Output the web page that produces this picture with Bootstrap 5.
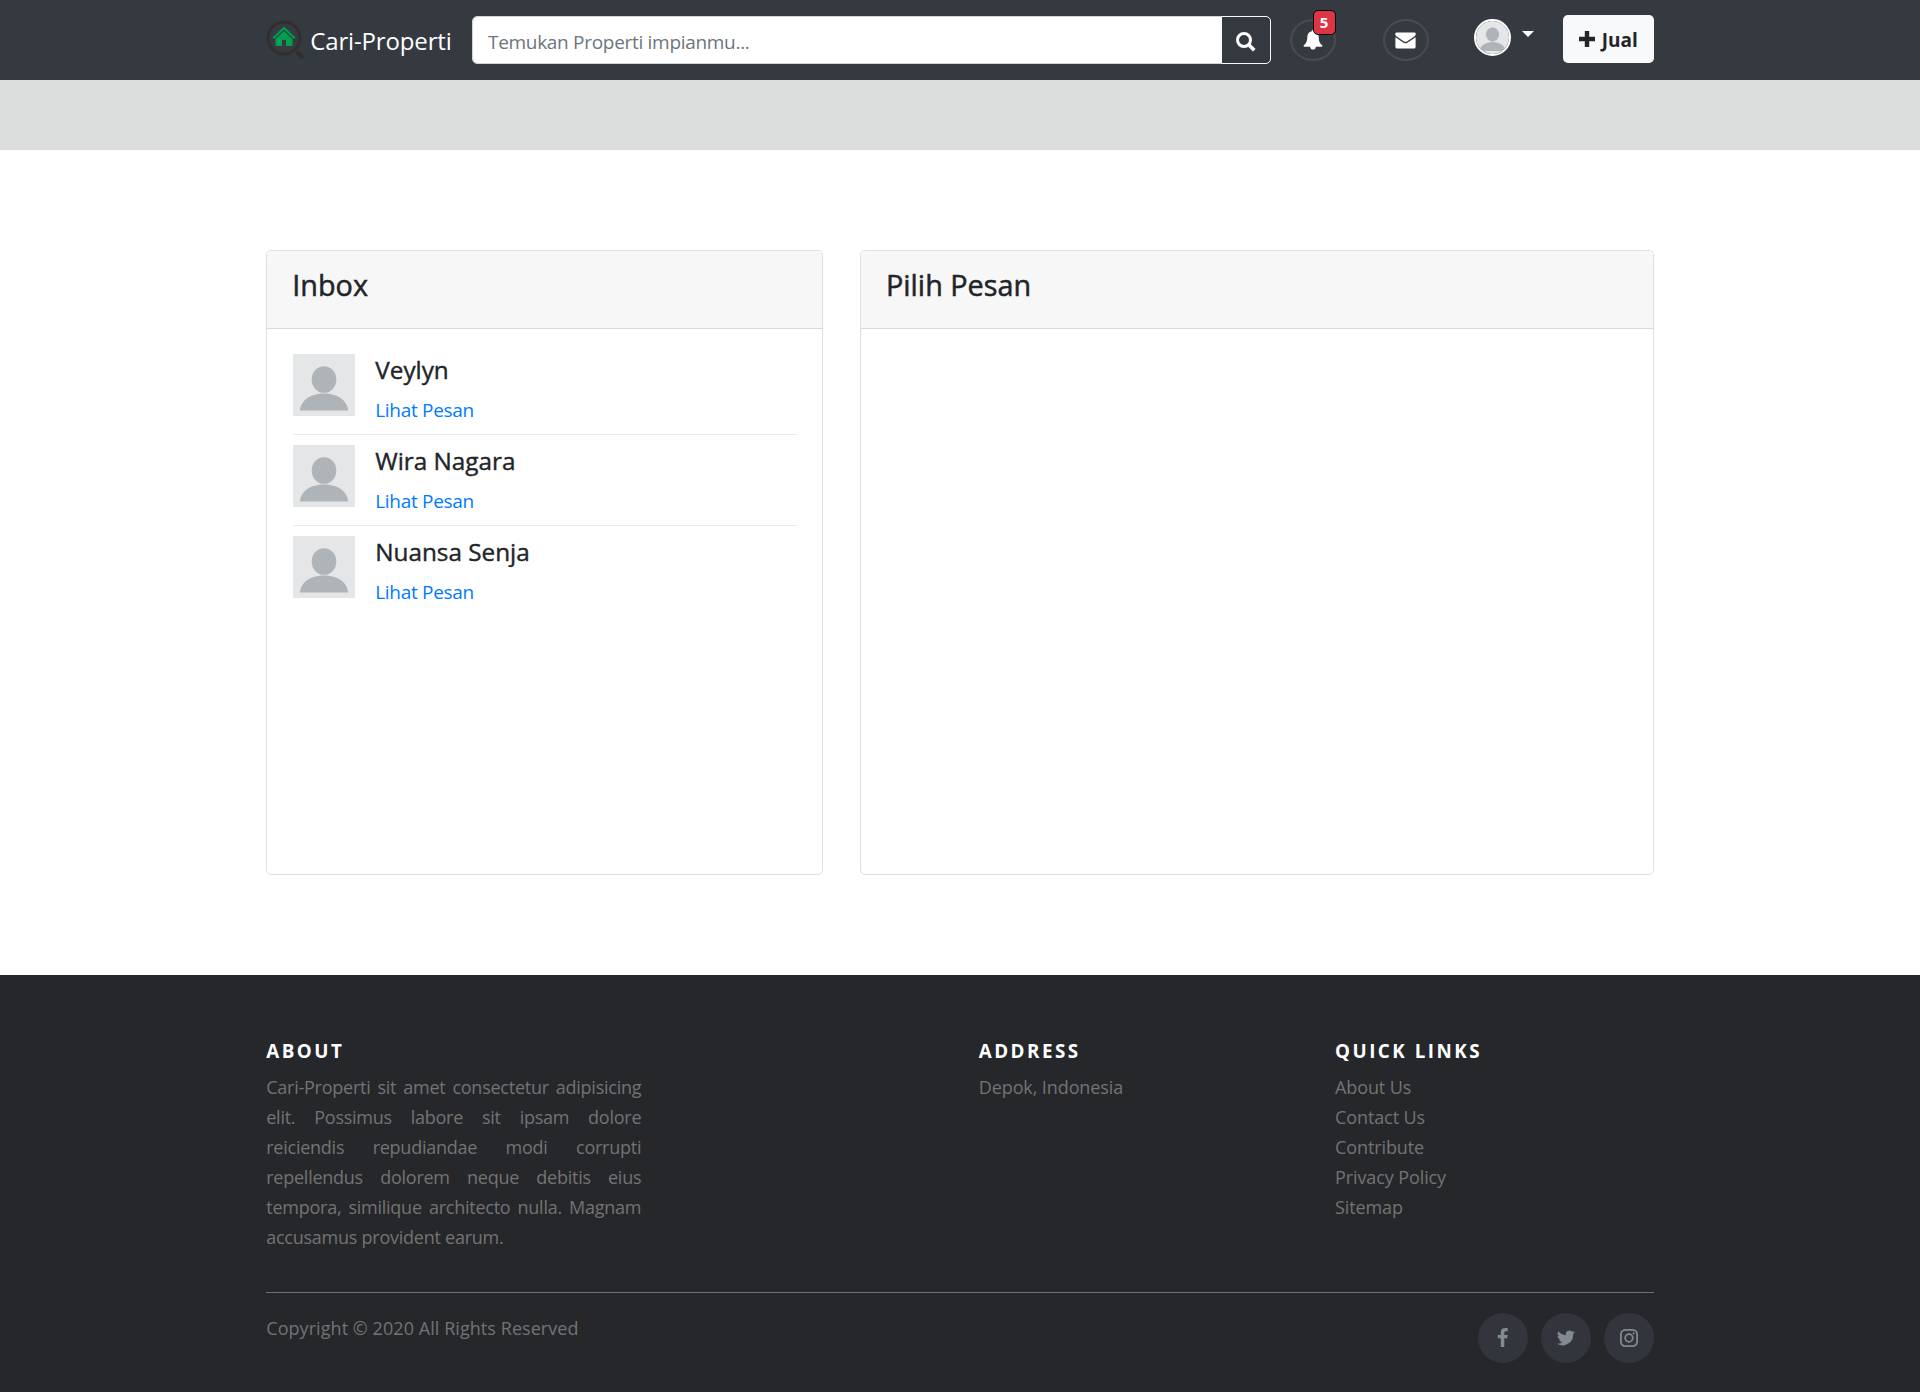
<!DOCTYPE html>
<html lang="id">
<head>
<meta charset="utf-8">
<meta name="viewport" content="width=device-width, initial-scale=1">
<title>Cari-Properti</title>
<link href="https://cdn.jsdelivr.net/npm/bootstrap@5.3.0/dist/css/bootstrap.min.css" rel="stylesheet">
<style>
html { font-size: 20px; }
body { font-family: "Open Sans", "Noto Sans", sans-serif; font-size: 19px; line-height: 30px; color: #212529; background: #fff; }
.container { max-width: 1425px; padding: 0 18.75px; }
.row { --bs-gutter-x: 37.5px; }
.topbar { height: 80px; background: #353a41; padding: 0; }
.topbar .container { height: 80px; align-items: flex-start; justify-content: flex-start; flex-wrap: nowrap; }
.brand-link { display: flex; width: 205.75px; color: #fff; text-decoration: none; font-size: 24px; padding-top: 20px; }
.brand-link span { margin: 6px 0 0 6px; white-space: nowrap; line-height: 30px; letter-spacing: -.15px; }
.search-group { width: 799px; height: 48px; margin-top: 16px; }
.search-group .form-control { border: 1px solid #ced4da; border-radius: 5px 0 0 5px; padding: 4px 15px 0; font-size: 19px; color: #495057; letter-spacing: -.3px; }
.search-group .form-control::placeholder { color: #6c757d; opacity: 1; }
.search-group .btn { width: 50px; padding: 0 1px 0 0; border: 1px solid #f8f9fa; border-radius: 0 5px 5px 0; color: #fff; }
.round-btn { width: 46px; height: 42px; border: 2px solid #4a4d50; border-radius: 50%; margin-top: 19px; color: #fff; display: flex; align-items: center; justify-content: center; position: relative; }
.bell-btn { margin-left: 18.5px; }
.mail-btn { margin-left: 47px; }
.bell-count { position: absolute; left: 21px; top: -11px; width: 23px; height: 25px; border: 1px solid #000; border-radius: 5px; background: #dc3545; font-size: 15px; font-weight: 700; line-height: 23px; text-align: center; color: #fff; }
.user-pic { width: 37px; height: 37px; border: 2px solid #fff; border-radius: 50%; overflow: hidden; margin: 19px 0 0 45px; display: block; }
.user-pic svg { display: block; width: 33px; height: 33px; }
.caret-down { border: 6px solid transparent; border-top-color: #fff; border-bottom: 0; margin: 31px 0 0 11px; }
.sell-btn { width: 91px; height: 48px; margin: 15px 0 0 auto; padding: 2px 0 0; font-size: 19px; font-weight: 700; background: #f8f9fa; border: 0; border-radius: 5px; color: #212529; display: flex; align-items: center; justify-content: center; gap: 7px; }
.sell-btn svg { margin-top: -2px; }
.band { height: 70px; background: #dcdedd; }
.inbox-zone { padding: 100px 0; }
.panel { height: 625px; border: 1px solid #dfdfdf; border-radius: 5px; }
.panel .card-header { height: 78px; padding: 15px 25px; background: #f7f7f7; border-bottom: 1px solid #d9d9d9; }
.panel .card-header h4 { font-size: 28.8px; line-height: 38px; font-weight: 500; -webkit-text-stroke: .5px; margin: 0; }
.panel .card-body { padding: 25px 25px 25px 26px; }
.chat-row { height: 91px; display: flex; gap: 20px; }
.chat-row + .chat-row { border-top: 1px solid #e9e9e9; padding-top: 10px; }
.chat-row:first-child { height: 80px; }
.chat-row h5 { font-size: 24.3px; line-height: 30px; font-weight: 500; -webkit-text-stroke: .4px; margin: 1px 0 10px; }
.chat-row a { color: #007bff; text-decoration: none; display: block; line-height: 30px; letter-spacing: -.3px; }
.site-footer { background: #26272b; color: #737373; height: 417px; padding-top: 56px; font-size: 18px; letter-spacing: -.1px; }
.site-footer h6 { color: #fff; font-size: 18.8px; line-height: 40px; font-weight: 700; letter-spacing: 2.5px; margin: 0 0 1px; }
.site-footer p { margin: 0; }
.about-text { width: 375px; text-align: justify; letter-spacing: -.25px; }
.site-footer .copy-text { letter-spacing: .06px; }
.site-footer ul { list-style: none; margin: 0; padding: 0; }
.site-footer a { color: #737373; text-decoration: none; }
.site-footer hr { border: 0; border-top: 1px solid #717173; opacity: 1; margin: 40px 0 20px; }
.socials { gap: 13px; }
.site-footer .socials a { width: 50px; height: 50px; border-radius: 50%; background: #33353d; color: #818a91; display: flex; align-items: center; justify-content: center; }
</style>
</head>
<body>
<svg width="0" height="0" class="d-none"><symbol id="avatar" viewBox="0 0 62 62"><rect width="62" height="62" fill="#e4e6e7"/><ellipse cx="31" cy="25.500" rx="12.300" ry="13.300" fill="#aeb4b7"/><path d="M7 56.500C7.500 46 18 39.500 31 39.500S54.500 46 55 56.500z" fill="#aeb4b7"/></symbol></svg>
<nav class="navbar topbar"><div class="container">
<a class="brand-link" href="#"><svg width="38" height="40" viewBox="0 0 38 40"><circle cx="18" cy="18" r="16" fill="none" stroke="#332d2d" stroke-width="2.800"/><path d="M30.500 31.500l6.500 6.500" stroke="#332d2d" stroke-width="4"/><path d="M18 6.500L29.500 17.500l-1.500 1.400L18 9.400 8 18.900 6.500 17.500z" fill="#009e4f"/><path d="M18 11L26.500 19v7H20v-6h-4v6H9.500v-7z" fill="#009e4f"/></svg><span>Cari-Properti</span></a>
<form class="input-group flex-nowrap search-group"><input class="form-control" type="text" placeholder="Temukan Properti impianmu..."><button class="btn" type="button" aria-label="Cari"><svg width="20" height="20" viewBox="0 0 20 20" fill="none" stroke="currentColor"><circle cx="8" cy="8" r="6.500" stroke-width="3"/><path d="M12.800 12.800l5.500 5.500" stroke-width="3.600"/></svg></button></form>
<a class="round-btn bell-btn" href="#"><svg width="20" height="20" viewBox="0 0 20 20" fill="currentColor"><path d="M10 0c.8 0 1.200.6 1.200 1.300 3 .6 4.500 3 4.500 5.700 0 5 1.800 7 3.800 8.500 0 .8-.6 1.300-1.300 1.300h-5.400a2.800 2.800 0 0 1-5.600 0H1.800c-.7 0-1.300-.5-1.300-1.300C2.500 14 4.300 12 4.300 7c0-2.700 1.500-5.100 4.500-5.700C8.800.6 9.200 0 10 0z"/></svg><span class="bell-count">5</span></a>
<a class="round-btn mail-btn" href="#"><svg width="21" height="17" viewBox="0 0 22 18" fill="currentColor"><path d="M2 .5h18a1.800 1.800 0 0 1 1.800 2.200c-.3 1.200-1.300 2-2.300 2.700L12.500 10c-1 .6-2 .6-3 0L2.500 5.400C1.500 4.700.5 3.900.2 2.700A1.800 1.800 0 0 1 2 .5z"/><path d="M.3 5.500L9 11.300c1.400.9 2.600.9 4 0l8.700-5.800v10a2 2 0 0 1-2 2H2.300a2 2 0 0 1-2-2z"/></svg></a>
<a class="user-pic" href="#"><svg><use href="#avatar"/></svg></a><span class="caret-down"></span>
<a class="btn sell-btn" href="#"><svg width="16" height="16" viewBox="0 0 16 16"><path d="M8 0v16M0 8h16" stroke="currentColor" stroke-width="4.400"/></svg>Jual</a>
</div></nav>
<div class="band"></div>
<main class="inbox-zone"><div class="container"><div class="row">
<div class="col-5"><div class="card panel"><div class="card-header"><h4>Inbox</h4></div><div class="card-body">
<div class="chat-row"><svg width="62" height="62"><use href="#avatar"/></svg><div><h5>Veylyn</h5><a href="#">Lihat Pesan</a></div></div>
<div class="chat-row"><svg width="62" height="62"><use href="#avatar"/></svg><div><h5>Wira Nagara</h5><a href="#">Lihat Pesan</a></div></div>
<div class="chat-row"><svg width="62" height="62"><use href="#avatar"/></svg><div><h5>Nuansa Senja</h5><a href="#">Lihat Pesan</a></div></div>
</div></div></div>
<div class="col-7"><div class="card panel"><div class="card-header"><h4>Pilih Pesan</h4></div><div class="card-body"></div></div></div>
</div></div></main>
<footer class="site-footer"><div class="container">
<div class="row">
<div class="col-6"><h6>ABOUT</h6><p class="about-text">Cari-Properti sit amet consectetur adipisicing elit. Possimus labore sit ipsam dolore reiciendis repudiandae modi corrupti repellendus dolorem neque debitis eius tempora, similique architecto nulla. Magnam accusamus provident earum.</p></div>
<div class="col-3"><h6>ADDRESS</h6><p>Depok, Indonesia</p></div>
<div class="col-3"><h6>QUICK LINKS</h6><ul><li><a href="#">About Us</a></li><li><a href="#">Contact Us</a></li><li><a href="#">Contribute</a></li><li><a href="#">Privacy Policy</a></li><li><a href="#">Sitemap</a></li></ul></div>
</div>
<hr>
<div class="d-flex justify-content-between"><p class="copy-text">Copyright © 2020 All Rights Reserved</p>
<div class="d-flex socials"><a href="#"><svg width="12" height="20" viewBox="0 0 12 20" fill="currentColor"><path d="M10.800.2v3H9c-1.400 0-1.700.7-1.700 1.700v2h3.400l-.5 3.300H7.300V19H3.800v-8.800h-3V6.900h3V4.400C3.800 1.500 5.600 0 8.200 0c1.200 0 2.300.1 2.600.2z"/></svg></a><a href="#"><svg width="18" height="16" viewBox="0 0 24 20" fill="currentColor"><path d="M24 2.400a10 10 0 0 1-2.800.8A5 5 0 0 0 23.300.5a10 10 0 0 1-3.100 1.200 4.900 4.900 0 0 0-8.400 4.500A14 14 0 0 1 1.700 1a4.900 4.900 0 0 0 1.500 6.600A5 5 0 0 1 1 7a4.900 4.900 0 0 0 3.900 4.900 5 5 0 0 1-2.200.1 4.900 4.900 0 0 0 4.600 3.400A9.900 9.900 0 0 1 0 17.500 14 14 0 0 0 21.500 5a10 10 0 0 0 2.500-2.600z"/></svg></a><a href="#"><svg width="18" height="18" viewBox="0 0 18 18" fill="none" stroke="currentColor" stroke-width="1.800"><rect x=".9" y=".9" width="16.200" height="16.200" rx="4.500"/><circle cx="9" cy="9" r="3.800"/><circle cx="13.700" cy="4.300" r="1.100" fill="currentColor" stroke="none"/></svg></a></div></div>
</div></footer>
<script src="https://cdn.jsdelivr.net/npm/bootstrap@5.3.0/dist/js/bootstrap.bundle.min.js"></script>
</body>
</html>
